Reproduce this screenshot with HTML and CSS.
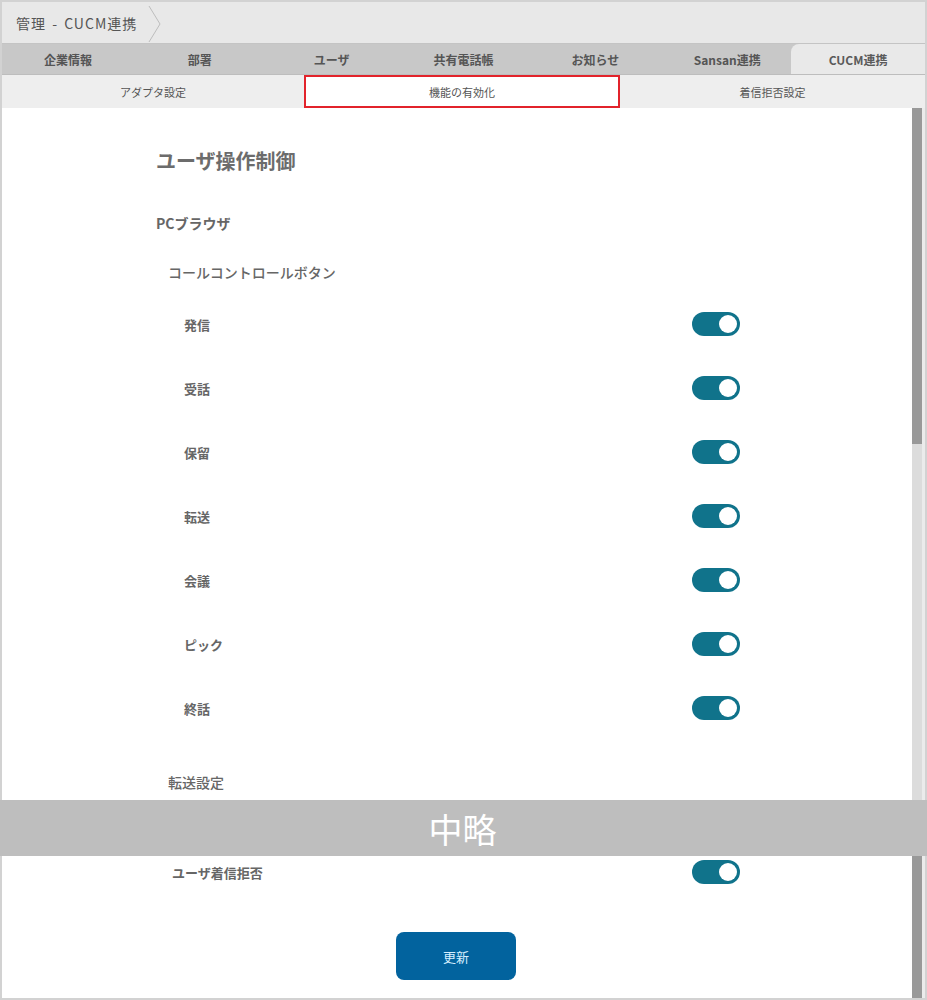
FILE: index.html
```html
<!DOCTYPE html>
<html lang="ja">
<head>
    <meta charset="UTF-8">
    <meta name="viewport" content="width=device-width, initial-scale=1.0">
    <title>管理 - CUCM連携</title>
    <link rel="stylesheet" href="styles.css">
</head>
<body>
    <div class="frame frame-top">
        <div class="header">
            <span class="crumb">管理 - CUCM連携</span>
            <svg class="chevron" width="14" height="38" viewBox="0 0 14 38">
                <polyline points="1,1 12,19 1,37" fill="none" stroke="#bdbdbd" stroke-width="1"/>
            </svg>
        </div>
        <div class="tabs">
            <div class="tab">企業情報</div>
            <div class="tab">部署</div>
            <div class="tab">ユーザ</div>
            <div class="tab">共有電話帳</div>
            <div class="tab">お知らせ</div>
            <div class="tab">Sansan連携</div>
            <div class="tab active">CUCM連携</div>
        </div>
        <div class="sub-tabs">
            <div class="sub-tab">アダプタ設定</div>
            <div class="sub-tab active">機能の有効化</div>
            <div class="sub-tab">着信拒否設定</div>
        </div>
        <div class="body-row">
            <div class="content">
                <h2 class="title">ユーザ操作制御</h2>
                <h3 class="group-title">PCブラウザ</h3>
                <h4 class="sub-title">コールコントロールボタン</h4>
                <div class="rows">
                    <div class="row"><span class="label">発信</span><span class="toggle"></span></div>
                    <div class="row"><span class="label">受話</span><span class="toggle"></span></div>
                    <div class="row"><span class="label">保留</span><span class="toggle"></span></div>
                    <div class="row"><span class="label">転送</span><span class="toggle"></span></div>
                    <div class="row"><span class="label">会議</span><span class="toggle"></span></div>
                    <div class="row"><span class="label">ピック</span><span class="toggle"></span></div>
                    <div class="row"><span class="label">終話</span><span class="toggle"></span></div>
                </div>
                <h4 class="sub-title transfer">転送設定</h4>
            </div>
            <div class="scrollbar">
                <div class="thumb thumb-top"></div>
                <div class="track"></div>
            </div>
        </div>
    </div>

    <div class="omitted">中略</div>

    <div class="frame frame-bottom">
        <div class="body-row">
            <div class="content content-bottom">
                <div class="rows">
                    <div class="row row-reject"><span class="label">ユーザ着信拒否</span><span class="toggle"></span></div>
                </div>
                <button class="update-btn" type="button">更新</button>
            </div>
            <div class="scrollbar">
                <div class="thumb"></div>
            </div>
        </div>
    </div>
</body>
</html>
```

FILE: styles.css
```css
* {
    margin: 0;
    padding: 0;
    box-sizing: border-box;
}
body {
    font-family: "Noto Sans CJK JP", "Noto Sans", sans-serif;
    background: #fff;
    width: 927px;
    color: #666;
}
.frame {
    border: 2px solid #d2d2d2;
}
.frame-top {
    border-bottom: none;
}
.frame-bottom {
    border-top: none;
}
.header {
    height: 42px;
    background: #e8e8e8;
    border-bottom: 1px solid #c4c4c4;
    display: flex;
    align-items: center;
    padding-left: 14px;
}
.crumb {
    font-size: 14px;
    letter-spacing: 1px;
    word-spacing: 2px;
    color: #555;
}
.chevron {
    margin-left: 11px;
    margin-top: 2px;
}
.tabs {
    display: grid;
    grid-template-columns: repeat(7, 1fr);
    height: 31px;
    background: #c8c8c8;
    border-bottom: 1px solid #bdbdbd;
}
.tab {
    display: flex;
    align-items: center;
    justify-content: center;
    font-size: 12px;
    font-weight: bold;
    color: #555;
}
.tab.active {
    background: #e9e9e9;
    border-top-left-radius: 8px;
    margin-left: -2px;
    color: #5a5a5a;
}
.sub-tabs {
    display: grid;
    grid-template-columns: 302px 316px 1fr;
    height: 33px;
    background: #eeeeee;
}
.sub-tab {
    display: flex;
    align-items: center;
    justify-content: center;
    font-size: 11px;
    color: #555;
}
.sub-tab.active {
    background: #fff;
    border: 2px solid #e2232b;
}
.body-row {
    display: flex;
}
.content {
    flex: 1;
    padding: 40px 0 8px 154px;
}
.title {
    font-size: 20px;
    line-height: 26px;
    font-weight: bold;
    color: #6c6c6c;
}
.group-title {
    margin-top: 39px;
    font-size: 14px;
    line-height: 20px;
    font-weight: bold;
    color: #666;
}
.sub-title {
    margin-top: 29px;
    padding-left: 12px;
    font-size: 14px;
    line-height: 20px;
    font-weight: 500;
    color: #666;
}
.sub-title.transfer {
    margin-top: 32px;
}
.rows {
    margin-top: 10px;
    width: 584px;
}
.row {
    height: 64px;
    display: flex;
    align-items: center;
    justify-content: space-between;
    padding-left: 28px;
}
.label {
    font-size: 13px;
    font-weight: bold;
    color: #666;
}
.toggle {
    position: relative;
    width: 48px;
    height: 24px;
    border-radius: 12px;
    background: #10738b;
}
.toggle::after {
    content: "";
    position: absolute;
    right: 3px;
    top: 3px;
    width: 18px;
    height: 18px;
    border-radius: 50%;
    background: #fff;
}
.scrollbar {
    width: 13px;
    display: flex;
    flex-direction: column;
    border-right: 3px solid #ebebeb;
}
.thumb {
    flex: 1;
    background: #999;
}
.thumb-top {
    flex: none;
    height: 336px;
}
.track {
    flex: 1;
    background: #dcdcdc;
}
.omitted {
    height: 56px;
    background: #bebebe;
    color: #fff;
    font-size: 34px;
    display: flex;
    align-items: center;
    justify-content: center;
    padding-right: 2px;
}
.content-bottom {
    padding: 0 0 18px 154px;
    display: flex;
    flex-direction: column;
}
.content-bottom .rows {
    margin-top: 0;
}
.row-reject {
    height: 32px;
    padding-left: 16px;
}
.update-btn {
    align-self: center;
    margin: 44px 0 0 -156px;
    width: 120px;
    height: 48px;
    border: none;
    border-radius: 8px;
    background: #02639e;
    color: #d6efff;
    font-family: inherit;
    font-size: 13px;
}
```
